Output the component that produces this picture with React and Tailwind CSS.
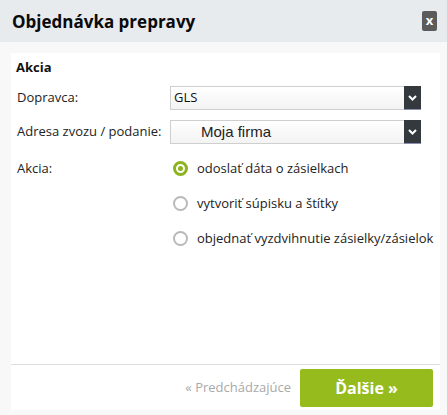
import React from 'react';

function Select({ value, indent }) {
  return (
    <div className="flex h-[24px] w-[251px] border border-[#cfcfcf] bg-gradient-to-b from-white to-[#f3f3f3]">
      <div
        className={`flex-1 flex items-center ${indent ? "pl-[30px] text-[15px] text-[#222] font-['Liberation_Sans',Arial,sans-serif]" : 'pl-[3px] text-[13px] text-[#111]'}`}
      >
        {value}
      </div>
      <div className="w-[17px] -my-px -mr-px bg-[#33393d] flex items-center justify-center border-b border-[#8a8fb0]">
        <svg width="9" height="6" viewBox="0 0 9 6">
          <path d="M1 1 L4.5 4.5 L8 1" stroke="white" strokeWidth="2" fill="none" />
        </svg>
      </div>
    </div>
  );
}

function Radio({ checked, label }) {
  return (
    <div className="flex items-center h-[35px]">
      {checked ? (
        <span className="w-[15px] h-[15px] rounded-full border-[3px] border-[#8db31f] flex items-center justify-center">
          <span className="w-[5px] h-[5px] rounded-full bg-[#8db31f]" />
        </span>
      ) : (
        <span className="w-[15px] h-[15px] rounded-full border-2 border-[#b9b9b9]" />
      )}
      <span className="ml-[9px] text-[13px] text-[#222]">{label}</span>
    </div>
  );
}

export default function App() {
  return (
    <div className="w-[447px] h-[415px] bg-[#f8f8f8] font-['Open_Sans',sans-serif] overflow-hidden">
      <div className="h-[42px] bg-[#e8ebee] flex items-center justify-between pl-[12px] pr-[10px]">
        <h1 className="text-[17px] font-bold text-[#0a0a0a] leading-none">Objednávka prepravy</h1>
        <button className="w-[15px] h-[20px] rounded-[2px] bg-[#5b5b5b] text-white font-bold text-[13px] leading-none flex items-center justify-center pb-[2px]">
          x
        </button>
      </div>

      <div className="pl-[11px] pr-[7px] pt-[11px]">
        <div className="bg-white h-[357px] flex flex-col">
          <div className="flex-1 pl-[5px] pt-[5px]">
            <h2 className="text-[13px] font-bold text-[#111] leading-[18px]">Akcia</h2>

            <div className="mt-[10px] flex flex-col">
              <div className="flex items-center">
                <span className="w-[154px] pl-[1px] text-[13px] text-[#222]">Dopravca:</span>
                <Select value="GLS" />
              </div>
              <div className="flex items-center mt-[10px]">
                <span className="w-[154px] pl-[1px] text-[13px] text-[#222]">Adresa zvozu / podanie:</span>
                <Select value="Moja firma" indent />
              </div>
              <div className="flex mt-[7px]">
                <span className="w-[157px] pl-[1px] text-[13px] text-[#222] pt-[8px]">Akcia:</span>
                <div className="flex flex-col">
                  <Radio checked label="odoslať dáta o zásielkach" />
                  <Radio label="vytvoriť súpisku a štítky" />
                  <Radio label="objednať vyzdvihnutie zásielky/zásielok" />
                </div>
              </div>
            </div>
          </div>

          <div className="border-t border-[#dedede] flex items-center justify-end pt-[4px] pb-[3px] pr-[7px]">
            <span className="text-[13px] text-[#a9a9a9] mr-[9px]">« Predchádzajúce</span>
            <button className="w-[133px] h-[38px] rounded-[2px] bg-[#95bb1d] text-white font-bold text-[16px]">
              Ďalšie »
            </button>
          </div>
        </div>
      </div>
    </div>
  );
}
